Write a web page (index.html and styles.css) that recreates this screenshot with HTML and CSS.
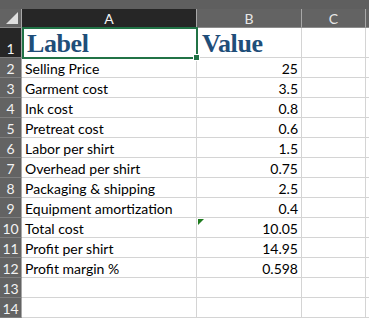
FILE: index.html
```html
<!DOCTYPE html>
<html lang="en">
<head>
<meta charset="UTF-8">
<title>Sheet</title>
<link rel="stylesheet" href="styles.css">
</head>
<body>
  <div class="sheet">
    <div class="band"></div>
    <div class="grid">
      <div class="hd corner"></div>
      <div class="hd col sel">A</div>
      <div class="hd col">B</div>
      <div class="hd col">C</div>
      <div class="hd col"></div>

      <div class="hd row sel">1</div>
      <div class="cell title">Label</div>
      <div class="cell title">Value</div>
      <div class="cell"></div>
      <div class="cell"></div>

      <div class="hd row">2</div>
      <div class="cell">Selling Price</div>
      <div class="cell num">25</div>
      <div class="cell"></div>
      <div class="cell"></div>

      <div class="hd row">3</div>
      <div class="cell">Garment cost</div>
      <div class="cell num">3.5</div>
      <div class="cell"></div>
      <div class="cell"></div>

      <div class="hd row">4</div>
      <div class="cell">Ink cost</div>
      <div class="cell num">0.8</div>
      <div class="cell"></div>
      <div class="cell"></div>

      <div class="hd row">5</div>
      <div class="cell">Pretreat cost</div>
      <div class="cell num">0.6</div>
      <div class="cell"></div>
      <div class="cell"></div>

      <div class="hd row">6</div>
      <div class="cell">Labor per shirt</div>
      <div class="cell num">1.5</div>
      <div class="cell"></div>
      <div class="cell"></div>

      <div class="hd row">7</div>
      <div class="cell">Overhead per shirt</div>
      <div class="cell num">0.75</div>
      <div class="cell"></div>
      <div class="cell"></div>

      <div class="hd row">8</div>
      <div class="cell">Packaging &amp; shipping</div>
      <div class="cell num">2.5</div>
      <div class="cell"></div>
      <div class="cell"></div>

      <div class="hd row">9</div>
      <div class="cell">Equipment amortization</div>
      <div class="cell num">0.4</div>
      <div class="cell"></div>
      <div class="cell"></div>

      <div class="hd row">10</div>
      <div class="cell">Total cost</div>
      <div class="cell num flag">10.05</div>
      <div class="cell"></div>
      <div class="cell"></div>

      <div class="hd row">11</div>
      <div class="cell">Profit per shirt</div>
      <div class="cell num">14.95</div>
      <div class="cell"></div>
      <div class="cell"></div>

      <div class="hd row">12</div>
      <div class="cell">Profit margin %</div>
      <div class="cell num">0.598</div>
      <div class="cell"></div>
      <div class="cell"></div>

      <div class="hd row">13</div>
      <div class="cell"></div>
      <div class="cell"></div>
      <div class="cell"></div>
      <div class="cell"></div>

      <div class="hd row">14</div>
      <div class="cell"></div>
      <div class="cell"></div>
      <div class="cell"></div>
      <div class="cell"></div>
    </div>
    <div class="selection"><span class="handle"></span></div>
  </div>
</body>
</html>
```

FILE: styles.css
```css
body {
  margin: 0;
  background: #ffffff;
  font-family: Lato, "Liberation Sans", sans-serif;
  font-size: 14px;
  color: #000000;
}
.sheet {
  position: relative;
  width: 369px;
  height: 320px;
  overflow: hidden;
}
.band {
  height: 9px;
  background: #5f5f5f;
}
.grid {
  display: grid;
  grid-template-columns: 22px 175px 105px 64px 1fr;
  grid-template-rows: 19px 30px repeat(13, 20px);
}
.hd {
  box-sizing: border-box;
  background: #636363;
  color: #e8e8e8;
  display: flex;
  justify-content: center;
  line-height: 17px;
}
.col {
  align-items: center;
  border-right: 1px solid #a8a8a8;
  border-bottom: 1px solid #8c8c8c;
}
.row {
  align-items: flex-end;
  border-right: 1px solid #a8a8a8;
  border-bottom: 1px solid #7e7e7e;
  color: #f2f2f2;
}
.hd.sel {
  background: #262626;
  color: #f4f4f4;
}
.corner {
  position: relative;
  border-right: 1px solid #a8a8a8;
  border-bottom: 1px solid #8c8c8c;
}
.corner::after {
  content: "";
  position: absolute;
  right: 3px;
  bottom: 3px;
  width: 12px;
  height: 12px;
  background: #dedede;
  clip-path: polygon(100% 0, 100% 100%, 0 100%);
}
.cell {
  box-sizing: border-box;
  border-right: 1px solid #d4d4d4;
  border-bottom: 1px solid #d4d4d4;
  display: flex;
  align-items: flex-end;
  padding: 0 3px;
  line-height: 17px;
  white-space: nowrap;
  position: relative;
}
.num {
  justify-content: flex-end;
}
.title {
  font-family: "Liberation Serif", serif;
  font-weight: bold;
  font-size: 26px;
  letter-spacing: -0.4px;
  line-height: 26px;
  color: #1f4e79;
  padding-left: 5px;
}
.flag::before {
  content: "";
  position: absolute;
  left: 1px;
  top: 1px;
  width: 6px;
  height: 6px;
  background: #1e7b1e;
  clip-path: polygon(0 0, 100% 0, 0 100%);
}
.selection {
  position: absolute;
  left: 22px;
  top: 27px;
  width: 176px;
  height: 32px;
  box-sizing: border-box;
  border: 2px solid #217346;
}
.handle {
  position: absolute;
  right: -4px;
  bottom: -4px;
  width: 5px;
  height: 5px;
  background: #217346;
  border: 1px solid #ffffff;
}
```
